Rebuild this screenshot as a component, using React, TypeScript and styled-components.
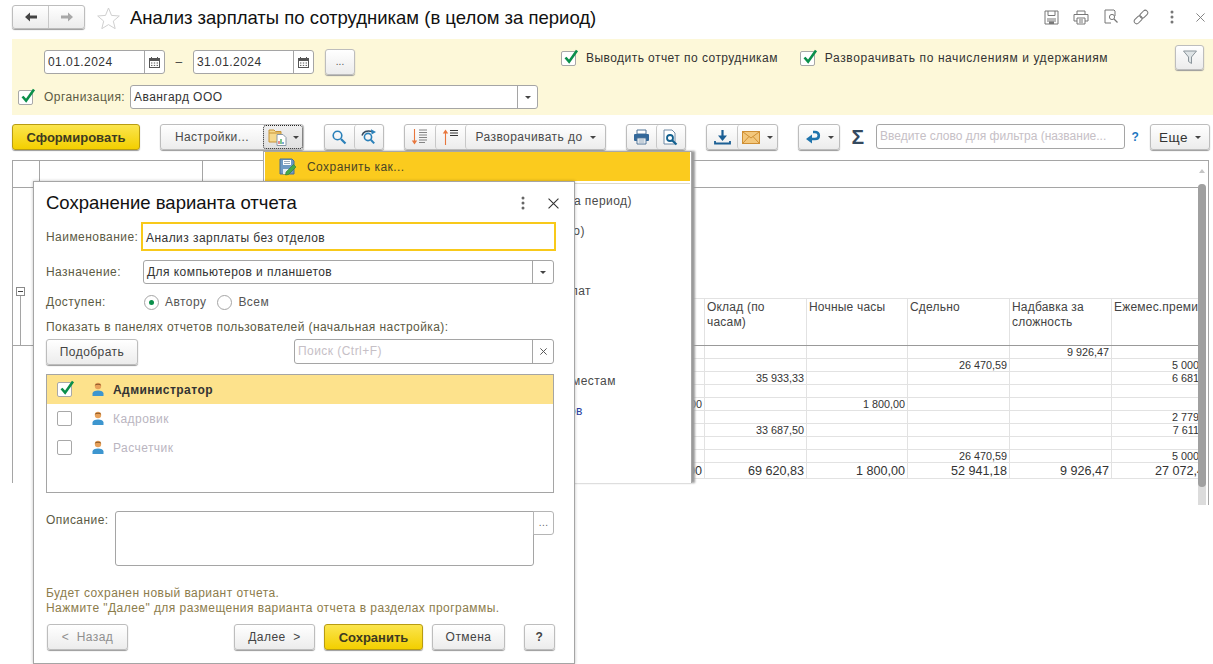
import React from "react";
import styled, { createGlobalStyle } from "styled-components";

const Global = createGlobalStyle`
  html, body { margin: 0; padding: 0; background: #fff; overflow: hidden; }
  body { font-family: "Liberation Sans", Arial, sans-serif; font-size: 12px; letter-spacing: .45px; color: #333; }
  * { box-sizing: border-box; }
`;

const Page = styled.div`
  position: relative;
  width: 1213px;
  height: 664px;
  overflow: hidden;
  background: #fff;
`;

/* ---------- header ---------- */
const Header = styled.header`
  display: flex;
  align-items: flex-start;
  height: 39px;
  padding: 5px 0 0 12px;
`;
const Nav = styled.div`
  display: flex;
  width: 73px;
  height: 24px;
  border: 1px solid #bdbdbd;
  border-radius: 3px;
  background: linear-gradient(#fff, #ececec);
  box-shadow: 0 1px 1px #999;
`;
const NavCell = styled.div<{ $divided?: boolean }>`
  flex: 1;
  display: flex;
  align-items: center;
  justify-content: center;
  border-left: ${(p) => (p.$divided ? "1px solid #c8c8c8" : "none")};
`;
const StarWrap = styled.div`
  margin: 2px 10px 0 12px;
  height: 22px;
`;
const Title = styled.h1`
  margin: 1px 0 0;
  font-size: 18.5px;
  font-weight: 400;
  letter-spacing: 0;
  line-height: 24px;
  color: #111;
  white-space: nowrap;
`;
const HeaderTools = styled.div`
  display: flex;
  align-items: center;
  gap: 14.5px;
  margin: 4px 8px 0 auto;
  > :nth-child(5) { margin-left: 6px; }
  > :nth-child(6) { margin-left: 8px; }
`;

/* ---------- filter panel ---------- */
const FilterPanel = styled.section`
  display: flex;
  height: 76px;
  margin-left: 12px;
  background: #fdf8d9;
`;
const FilterLeft = styled.div`
  width: 549px;
  padding: 11px 0 0 6px;
`;
const DateRow = styled.div`
  display: flex;
  align-items: center;
  height: 24px;
  padding-left: 26px;
`;
const Dash = styled.span`
  width: 28px;
  text-align: center;
  color: #444;
`;
const Field = styled.div<{ $w: number; $h?: number }>`
  display: flex;
  width: ${(p) => p.$w}px;
  height: ${(p) => p.$h ?? 24}px;
  flex: none;
  background: #fff;
  border: 1px solid #a5a5a5;
  border-radius: 3px;
  color: #333;
  line-height: ${(p) => (p.$h ?? 24) - 2}px;
`;
const FieldText = styled.div<{ $muted?: boolean }>`
  flex: 1;
  min-width: 0;
  padding-left: 3px;
  overflow: hidden;
  white-space: nowrap;
  color: ${(p) => (p.$muted ? "#c6c0c6" : "#333")};
`;
const FieldBtn = styled.div<{ $w?: number }>`
  width: ${(p) => p.$w ?? 20}px;
  flex: none;
  display: flex;
  align-items: center;
  justify-content: center;
  border-left: 1px solid #a5a5a5;
  color: #555;
`;
const DotsBtn = styled.button`
  width: 30px;
  height: 26px;
  margin-left: 11px;
  padding: 0 0 2px;
  border: 1px solid #bdbdbd;
  border-radius: 3px;
  background: linear-gradient(#fff, #ececec);
  box-shadow: 0 1px 1px #999;
  font: 10px "Liberation Sans", sans-serif;
  color: #555;
`;
const OrgRow = styled.div`
  display: flex;
  align-items: center;
  height: 24px;
  margin-top: 11px;
`;
const Label = styled.span<{ $w?: number }>`
  color: #5c5a44;
  white-space: nowrap;
  ${(p) => (p.$w ? `width: ${p.$w}px; flex: none;` : "")}
`;
const OrgLabel = styled(Label)`
  margin-left: 11px;
`;
const FilterChecks = styled.div`
  display: flex;
  gap: 22px;
  padding-top: 10px;
  height: 34px;
`;
const CheckLabel = styled.label`
  display: flex;
  align-items: center;
  gap: 10px;
  color: #333;
  white-space: nowrap;
  height: 18px;
`;
const WideCheckLabel = styled(CheckLabel)`
  letter-spacing: .6px;
`;
const FilterBtn = styled.button`
  display: flex;
  align-items: center;
  justify-content: center;
  width: 29px;
  height: 25px;
  margin: 6px 9px 0 auto;
  padding: 0;
  border: 1px solid #bdbdbd;
  border-radius: 3px;
  background: linear-gradient(#fff, #ececec);
  box-shadow: 0 1px 1px #999;
`;
const CheckBox = styled.span`
  position: relative;
  display: inline-block;
  flex: none;
  width: 15px;
  height: 15px;
  background: #fff;
  border: 1px solid #a8a8a8;
  border-radius: 2px;
  svg { position: absolute; left: 1px; top: -3px; }
`;

/* ---------- toolbar ---------- */
const Toolbar = styled.nav`
  display: flex;
  align-items: flex-start;
  gap: 20px;
  height: 26px;
  margin-top: 9px;
  padding-left: 12px;
`;
const btnBase = `
  display: flex;
  align-items: center;
  justify-content: center;
  height: 26px;
  border-radius: 3px;
  white-space: nowrap;
  font: 12px "Liberation Sans", sans-serif;
  letter-spacing: .45px;
`;
const PrimaryButton = styled.button<{ $w: number }>`
  ${btnBase}
  width: ${(p) => p.$w}px;
  padding: 0;
  border: 1px solid #b89c12;
  background: linear-gradient(#fbe54e, #f3cf00);
  box-shadow: 0 1px 1px #999;
  font-weight: 700;
  font-size: 13px;
  letter-spacing: 0;
  color: #3d3a20;
`;
const Group = styled.div<{ $w: number }>`
  display: flex;
  width: ${(p) => p.$w}px;
  height: 26px;
  flex: none;
  border: 1px solid #bdbdbd;
  border-radius: 3px;
  background: linear-gradient(#fff, #ececec);
  box-shadow: 0 1px 1px #999;
`;
const GroupCell = styled.div<{ $w?: number; $divided?: boolean; $gap?: number }>`
  ${btnBase}
  height: 24px;
  position: relative;
  gap: ${(p) => p.$gap ?? 5}px;
  color: #4a4a4a;
  ${(p) => (p.$w ? `width: ${p.$w}px; flex: none;` : "flex: 1;")}
  border-left: ${(p) => (p.$divided ? "1px solid #c8c8c8" : "none")};
`;
const FocusCell = styled(GroupCell)`
  outline: 1px dotted #222;
  outline-offset: -1px;
  background: linear-gradient(#f0f0f0, #e0e0e0);
`;
const MoreCell = styled(GroupCell)`
  font-size: 13.5px;
  color: #333;
`;
const Caret = styled.span`
  display: inline-block;
  width: 0;
  height: 0;
  border-left: 3px solid transparent;
  border-right: 3px solid transparent;
  border-top: 3px solid #444;
  margin-top: 1px;
`;
const SigmaBox = styled.div`
  width: 36px;
  margin-left: -20px;
  margin-right: -20px;
  text-align: center;
  font-size: 21px;
  line-height: 26px;
  font-weight: 700;
  color: #34495e;
`;
const SearchField = styled(Field)`
  letter-spacing: 0;
`;
const Help = styled.div`
  width: 25px;
  margin-left: -20px;
  margin-right: -20px;
  padding-right: 4px;
  text-align: center;
  line-height: 26px;
  font-weight: 700;
  color: #1f78c1;
`;

/* ---------- report ---------- */
const Report = styled.section`
  display: flex;
  align-items: flex-start;
  width: 1197px;
  margin: 10px 0 0 12px;
`;
const ReportBody = styled.div`
  width: 1186px;
  height: 323px;
  flex: none;
  overflow: hidden;
  border-top: 1px solid #a5a5a5;
  border-left: 1px solid #a5a5a5;
`;
const SheetHeads = styled.div`
  display: flex;
  height: 27px;
  border-bottom: 1px solid #a5a5a5;
`;
const SheetHead = styled.div<{ $w: number }>`
  width: ${(p) => p.$w}px;
  border-right: 1px solid #a5a5a5;
`;
const Sheet = styled.div`
  display: flex;
`;
const Gutter = styled.div`
  width: 21px;
  flex: none;
  height: 158px;
  padding: 99px 0 0 3px;
  border-bottom: 1px solid #a5a5a5;
`;
const OutlineBox = styled.div`
  position: relative;
  width: 9px;
  height: 9px;
  border: 1px solid #8a8a8a;
  background: #fff;
  &::after { content: ""; position: absolute; left: 1px; right: 1px; top: 3px; height: 1px; background: #444; }
`;
const OutlineLine = styled.div`
  width: 1px;
  height: 49px;
  margin-left: 4px;
  background: #a5a5a5;
`;
const DataTable = styled.table`
  flex: none;
  width: 614px;
  margin: 110px 0 0 568px;
  table-layout: fixed;
  border-collapse: collapse;
  font-size: 10.8px;
  letter-spacing: 0;
  color: #333;
  th, td { border: 1px solid #e2e2e2; padding: 0 2px 0 3px; overflow: hidden; white-space: nowrap; }
  th {
    height: 47px;
    padding: 1px 2px 0;
    vertical-align: top;
    text-align: left;
    font-weight: 400;
    font-size: 12px;
    letter-spacing: .2px;
    line-height: 15px;
    color: #444;
    white-space: normal;
    border-bottom: 1px solid #999;
  }
  td { height: 13px; line-height: 12px; text-align: right; }
`;
const TotalRow = styled.tr`
  td { height: 16px; padding-top: 1px; font-size: 12.6px; line-height: 14px; color: #333; }
  td:last-child { padding-right: 5px; }
`;
const ScrollColumn = styled.div`
  position: relative;
  width: 11px;
  height: 345px;
  flex: none;
  border-top: 1px solid #a5a5a5;
  border-right: 1px solid #a5a5a5;
  padding-right: 2px;
`;
const ScrollArrow = styled.div`
  height: 23px;
  padding: 8px 0 0 1px;
  &::after {
    content: "";
    display: block;
    width: 0;
    height: 0;
    border-left: 3px solid transparent;
    border-right: 3px solid transparent;
    border-bottom: 4px solid #c4c4c4;
  }
`;
const ScrollTrack = styled.div`
  height: 321px;
  background: #dcdcdc;
  border-radius: 4px 4px 0 0;
`;
const ScrollThumb = styled.div`
  height: 303px;
  background: #a0a0a0;
  border-radius: 4px;
`;

/* ---------- dropdown ---------- */
const Menu = styled.div`
  position: absolute;
  left: 263px;
  top: 151px;
  width: 429px;
  height: 332px;
  padding: 0 1px 1px;
  background: #fff;
  border: 1px solid #a8a8a8;
  border-bottom: none;
  box-shadow: 3px 0 2px #9a9a9a;
`;
const MenuActive = styled.div`
  display: flex;
  align-items: center;
  gap: 10px;
  height: 29px;
  padding-left: 14px;
  background: #fbcb1e;
  color: #4a4526;
`;
const MenuSep = styled.div`
  height: 1px;
  margin-top: 2px;
  background: #ddd8c6;
`;
const MenuItem = styled.div<{ $blue?: boolean }>`
  height: 30px;
  padding-left: 42px;
  line-height: 30px;
  white-space: nowrap;
  color: ${(p) => (p.$blue ? "#2b3fa0" : "#4a4a4a")};
`;
const MenuList = styled.div`
  margin-top: 2px;
`;

/* ---------- dialog ---------- */
const Dialog = styled.div`
  position: absolute;
  left: 33px;
  top: 181px;
  width: 542px;
  height: 483px;
  padding: 0 20px 0 12px;
  background: #fff;
  border: 1px solid #a5a5a5;
  box-shadow: 0 0 3px rgba(0, 0, 0, 0.25);
`;
const DialogHead = styled.div`
  display: flex;
  align-items: center;
  height: 40px;
`;
const DialogTitle = styled.h2`
  margin: 2px 0 0;
  font-size: 18.5px;
  font-weight: 400;
  letter-spacing: 0;
  color: #111;
  white-space: nowrap;
`;
const DialogTools = styled.div`
  display: flex;
  align-items: center;
  gap: 23px;
  margin: 2px -5px 0 auto;
`;
const NameRow = styled.div`
  display: flex;
  align-items: center;
  height: 29px;
  margin-right: -2px;
`;
const NameLabel = styled(Label)`
  padding-top: 1px;
`;
const NameInput = styled.div`
  flex: 1;
  height: 29px;
  padding-left: 3px;
  border: 2px solid #f8c91a;
  line-height: 28px;
  color: #333;
`;
const SelectRow = styled.div`
  display: flex;
  align-items: center;
  margin-top: 9px;
`;
const RadioRow = styled.div`
  display: flex;
  align-items: center;
  height: 18px;
  margin-top: 9px;
`;
const RadioLabel = styled.label`
  display: flex;
  align-items: center;
  gap: 6px;
  margin-right: 11px;
  color: #555;
`;
const Radio = styled.span<{ $on?: boolean }>`
  position: relative;
  width: 15px;
  height: 15px;
  flex: none;
  border: 1px solid #a5a5a5;
  border-radius: 50%;
  background: #fff;
  ${(p) =>
    p.$on
      ? `&::after { content: ""; position: absolute; left: 4px; top: 4px; width: 5px; height: 5px; border-radius: 50%; background: #0a8f4a; }`
      : ""}
`;
const Caption = styled.div`
  margin-top: 9px;
  height: 14px;
  line-height: 14px;
  letter-spacing: .42px;
  white-space: nowrap;
  color: #5c5a44;
`;
const PickRow = styled.div`
  display: flex;
  align-items: flex-start;
  justify-content: space-between;
  margin-top: 5px;
  height: 25px;
`;
const PlainButton = styled.button<{ $w: number }>`
  ${btnBase}
  width: ${(p) => p.$w}px;
  height: 26px;
  padding: 0;
  flex: none;
  border: 1px solid #bdbdbd;
  background: linear-gradient(#fff, #ececec);
  box-shadow: 0 1px 1px #999;
  color: #444;
`;
const UserList = styled.div`
  height: 119px;
  margin-top: 10px;
  border: 1px solid #a5a5a5;
`;
const UserRow = styled.div<{ $active?: boolean }>`
  display: flex;
  align-items: center;
  height: 29px;
  padding-left: 10px;
  background: ${(p) => (p.$active ? "#fde28c" : "#fff")};
  color: ${(p) => (p.$active ? "#333" : "#bab5bf")};
  font-weight: ${(p) => (p.$active ? 700 : 400)};
`;
const PersonMark = styled.span`
  display: flex;
  margin: 0 8px 0 19px;
`;
const DescRow = styled.div`
  display: flex;
  margin-top: 18px;
`;
const DescLabel = styled(Label)`
  width: 69px;
  padding-top: 2px;
`;
const DescArea = styled.div`
  width: 420px;
  height: 55px;
  background: #fff;
  border: 1px solid #a5a5a5;
  border-radius: 3px 0 3px 3px;
`;
const DescBtn = styled.div`
  width: 21px;
  height: 24px;
  margin-left: -1px;
  border: 1px solid #b5b5b5;
  border-radius: 0 3px 3px 0;
  text-align: center;
  line-height: 22px;
  font-size: 10px;
  color: #666;
`;
const Hint = styled.p`
  margin: 20px 0 0;
  line-height: 15px;
  color: #8c7c4b;
  white-space: nowrap;
`;
const Footer = styled.div`
  display: flex;
  align-items: flex-start;
  margin: 8px -1px 0 1px;
`;
const FooterButton = styled(PlainButton)<{ $mute?: boolean; $ml?: number }>`
  margin-left: ${(p) => p.$ml ?? 0}px;
  color: ${(p) => (p.$mute ? "#8f8f8f" : "#444")};
`;
const SaveButton = styled(PrimaryButton)`
  margin-left: 9px;
`;

/* ---------- icons ---------- */
const ArrowL = ({ c = "#444" }: { c?: string }) => (
  <svg width="14" height="12" viewBox="0 0 14 12"><path d="M1 6l5-4.500v3h7v3H6v3z" fill={c} /></svg>
);
const ArrowR = ({ c = "#a8a8a8" }: { c?: string }) => (
  <svg width="14" height="12" viewBox="0 0 14 12"><path d="M13 6L8 1.500v3H1v3h7v3z" fill={c} /></svg>
);
const Star = () => (
  <svg width="23" height="22" viewBox="0 0 23 22">
    <path d="M11.500 1l3 7.400 7.800.6-6 5.100 1.900 7.600-6.700-4.100-6.700 4.100 1.900-7.600-6-5.100 7.800-.6z" fill="#fff" stroke="#cfcfcf" />
  </svg>
);
const Check = () => (
  <svg width="16" height="16" viewBox="0 0 16 16">
    <path d="M2.500 8.500l3.600 4.200L14 1.500" fill="none" stroke="#0b8f4b" strokeWidth="2.600" />
  </svg>
);
const Calendar = () => (
  <svg width="11" height="11" viewBox="0 0 11 11">
    <rect x=".5" y="1.500" width="10" height="9" fill="#fff" stroke="#555" />
    <rect x="1" y="1" width="9" height="3" fill="#555" />
    <path d="M2.500 0v2M8.500 0v2" stroke="#555" />
    <path d="M2 6h1.400M4.800 6h1.400M7.600 6H9M2 8.400h1.400M4.800 8.400h1.400M7.600 8.400H9" stroke="#555" />
  </svg>
);
const Funnel = () => (
  <svg width="14" height="15" viewBox="0 0 14 15">
    <path d="M.5 1h13L8.500 7v6.500l-3-2V7z" fill="#dfe4e6" stroke="#8a949a" />
  </svg>
);
const FolderChart = () => (
  <svg width="20" height="18" viewBox="0 0 20 18">
    <path d="M1 2h5l1.500 1.500H13V14H1z" fill="#f6d98c" stroke="#c89436" />
    <path d="M1 5h12" stroke="#c89436" />
    <path d="M9 6.500h6l3 3v8H9z" fill="#fff" stroke="#8a98a4" />
    <path d="M11 16v-3" stroke="#d9534f" strokeWidth="1.300" />
    <path d="M13 16v-5" stroke="#3aa655" strokeWidth="1.300" />
    <path d="M15 16v-2" stroke="#3b7fc4" strokeWidth="1.300" />
  </svg>
);
const Loupe = () => (
  <svg width="16" height="16" viewBox="0 0 16 16">
    <circle cx="6.500" cy="6.500" r="4.300" fill="none" stroke="#2a80b9" strokeWidth="1.600" />
    <path d="M10 10l4.500 4.500" stroke="#2a80b9" strokeWidth="2.200" />
  </svg>
);
const LoupeRefresh = () => (
  <svg width="18" height="16" viewBox="0 0 18 16">
    <circle cx="8" cy="8" r="3.600" fill="none" stroke="#2a80b9" strokeWidth="1.600" />
    <path d="M10.800 10.800l3.400 3.600" stroke="#2a80b9" strokeWidth="2" />
    <path d="M2 6.500C3 3 7 .8 12 2.500" fill="none" stroke="#34495e" strokeWidth="1.500" />
    <path d="M11 .2l5 2.800-4.400 2.600z" fill="#2a80b9" />
  </svg>
);
const SortDown = () => (
  <svg width="18" height="18" viewBox="0 0 18 18">
    <path d="M3.500 1v13" stroke="#e8763c" strokeWidth="1.100" />
    <path d="M.8 12.500h5.400L3.500 16.500z" fill="#e8763c" />
    <path d="M8 2h8M8 4.500h8M8 7h8M8 9.500h8M8 12h8M8 14.500h6" stroke="#777" strokeWidth=".9" />
  </svg>
);
const SortUp = () => (
  <svg width="18" height="18" viewBox="0 0 18 18">
    <path d="M3.500 17V4" stroke="#e8763c" strokeWidth="1.100" />
    <path d="M.8 5.500h5.400L3.500 1.500z" fill="#e8763c" />
    <path d="M8 2.500h8M8 5h8M8 7.500h8" stroke="#333" strokeWidth="1" />
  </svg>
);
const Printer = () => (
  <svg width="17" height="16" viewBox="0 0 17 16">
    <path d="M4 1h9v4H4z" fill="#fff" stroke="#4f7396" />
    <rect x="1" y="5" width="15" height="7" rx="1" fill="#33689a" />
    <path d="M4 9h9v6H4z" fill="#fff" stroke="#4f7396" />
    <path d="M5.500 11h6M5.500 13h6" stroke="#8aa0b4" />
  </svg>
);
const Preview = () => (
  <svg width="17" height="17" viewBox="0 0 17 17">
    <path d="M2 1h8l3 3v11H2z" fill="#fff" stroke="#6e8aa5" />
    <circle cx="8" cy="9" r="3" fill="#fff" stroke="#12608f" strokeWidth="1.800" />
    <path d="M10 11.200l4.500 4.300" stroke="#12608f" strokeWidth="2.200" />
  </svg>
);
const Download = () => (
  <svg width="17" height="16" viewBox="0 0 17 16">
    <path d="M8.500 1v7" stroke="#1b5f94" strokeWidth="2.200" />
    <path d="M4 6.500h9L8.500 12z" fill="#1b5f94" />
    <path d="M1 12v2.500h15V12" fill="none" stroke="#1b5f94" strokeWidth="1.800" />
  </svg>
);
const Mail = () => (
  <svg width="18" height="13" viewBox="0 0 18 13">
    <rect x=".5" y=".5" width="17" height="12" fill="#f3c77c" stroke="#cf8f34" />
    <path d="M1 1l8 6 8-6M1 12l6-6.500M17 12l-6-6.500" fill="none" stroke="#cf8f34" />
  </svg>
);
const Undo = () => (
  <svg width="16" height="15" viewBox="0 0 16 15">
    <path d="M6 9h4c2.400 0 3.800-1.400 3.800-3.600S12.400 2 10 2H8" fill="none" stroke="#1f74ad" strokeWidth="2.600" />
    <path d="M7 4.500v9L1 9z" fill="#1f74ad" />
  </svg>
);
const SaveAs = () => (
  <svg width="18" height="18" viewBox="0 0 18 18">
    <path d="M1 1h12l2 2v13H1z" fill="#6f9ac4" stroke="#4a6f96" />
    <path d="M4 2h8v5H4z" fill="#fff" />
    <path d="M5 3.500h6M5 5.500h6" stroke="#9ab" />
    <path d="M4 11h6v5H4z" fill="#e6edf3" />
    <path d="M7 14l7.500-7.500 2.500 2.500L9.500 16.500 6.500 17z" fill="#46a84a" stroke="#2e7d32" strokeWidth=".6" />
  </svg>
);
const Person = () => (
  <svg width="14" height="15" viewBox="0 0 14 15">
    <circle cx="7" cy="4" r="3.200" fill="#e8a15a" />
    <path d="M3.800 3.500C4 1 10 1 10.200 3.500 8.500 2.500 5.500 2.500 3.800 3.500z" fill="#8a5a2a" />
    <path d="M1.500 14v-2.500C1.500 9.500 4 8.500 7 8.500s5.500 1 5.500 3V14z" fill="#3d96cf" />
  </svg>
);
const DiskGrey = () => (
  <svg width="15" height="15" viewBox="0 0 15 15">
    <path d="M1 1h13v13H1z" fill="none" stroke="#777" />
    <path d="M4 1v4.500h7V1M3 9h9M3 11h9" fill="none" stroke="#777" />
    <path d="M5 11.500h5V14H5z" fill="#777" />
  </svg>
);
const PrinterGrey = () => (
  <svg width="16" height="15" viewBox="0 0 16 15">
    <path d="M4 4V1h8v3M1 4.500h14v6.500h-3M4 11H1V4.500" fill="none" stroke="#777" />
    <path d="M4 8h8v6H4zM6 10h4M6 12h4" fill="none" stroke="#777" />
  </svg>
);
const PreviewGrey = () => (
  <svg width="15" height="16" viewBox="0 0 15 16">
    <path d="M10 1H1v13h6M10 1l1 1v5" fill="none" stroke="#777" />
    <circle cx="8" cy="8" r="2.600" fill="none" stroke="#777" />
    <path d="M10 10l3.500 3.500" stroke="#777" strokeWidth="1.300" />
  </svg>
);
const LinkGrey = () => (
  <svg width="16" height="16" viewBox="0 0 16 16">
    <g transform="rotate(-45 8 8)" fill="none" stroke="#777">
      <rect x="-.5" y="5.500" width="9" height="5" rx="2.500" />
      <rect x="7.500" y="5.500" width="9" height="5" rx="2.500" />
    </g>
  </svg>
);
const Dots = ({ c = "#777" }: { c?: string }) => (
  <svg width="4" height="14" viewBox="0 0 4 14">
    <circle cx="2" cy="2" r="1.500" fill={c} /><circle cx="2" cy="7" r="1.500" fill={c} /><circle cx="2" cy="12" r="1.500" fill={c} />
  </svg>
);
const Cross = ({ s = 9, c = "#777", w = 1 }: { s?: number; c?: string; w?: number }) => (
  <svg width={s} height={s} viewBox="0 0 10 10"><path d="M.5.5l9 9M9.500.5l-9 9" stroke={c} strokeWidth={w} /></svg>
);

const rows: string[][] = [
  ["", "", "", "", "9 926,47", ""],
  ["", "", "", "26 470,59", "", "5 000,00"],
  ["", "35 933,33", "", "", "", "6 681,25"],
  ["", "", "", "", "", ""],
  ["00", "", "1 800,00", "", "", ""],
  ["", "", "", "", "", "2 779,41"],
  ["", "33 687,50", "", "", "", "7 611,76"],
  ["", "", "", "", "", ""],
  ["", "", "", "26 470,59", "", "5 000,00"],
];
const totals = ["00", "69 620,83", "1 800,00", "52 941,18", "9 926,47", "27 072,42"];
const heads = ["", "Оклад (по часам)", "Ночные часы", "Сдельно", "Надбавка за сложность", "Ежемес.премия"];
const colWidths = [102, 102, 101, 102, 102, 105];

const menuItems: { text: string; blue?: boolean }[] = [
  { text: "Анализ зарплаты по сотрудникам (в целом за период)" },
  { text: "Анализ зарплаты по сотрудникам (помесячно)" },
  { text: "" },
  { text: "Анализ зарплаты сотрудников и прочих выплат" },
  { text: "" },
  { text: "" },
  { text: "Анализ зарплаты по работникам и рабочим местам" },
  { text: "Анализ зарплаты и взносов работников цехов", blue: true },
];

const users = [
  { name: "Администратор", on: true },
  { name: "Кадровик", on: false },
  { name: "Расчетчик", on: false },
];

export default function App() {
  return (
    <Page>
      <Global />
      <Header>
        <Nav>
          <NavCell><ArrowL /></NavCell>
          <NavCell $divided><ArrowR /></NavCell>
        </Nav>
        <StarWrap><Star /></StarWrap>
        <Title>Анализ зарплаты по сотрудникам (в целом за период)</Title>
        <HeaderTools>
          <DiskGrey /><PrinterGrey /><PreviewGrey /><LinkGrey /><Dots />
          <Cross />
        </HeaderTools>
      </Header>

      <FilterPanel>
        <FilterLeft>
          <DateRow>
            <Field $w={121}>
              <FieldText>01.01.2024</FieldText>
              <FieldBtn><Calendar /></FieldBtn>
            </Field>
            <Dash>–</Dash>
            <Field $w={121}>
              <FieldText>31.01.2024</FieldText>
              <FieldBtn><Calendar /></FieldBtn>
            </Field>
            <DotsBtn>...</DotsBtn>
          </DateRow>
          <OrgRow>
            <CheckBox><Check /></CheckBox>
            <OrgLabel $w={86}>Организация:</OrgLabel>
            <Field $w={408}>
              <FieldText>Авангард ООО</FieldText>
              <FieldBtn><Caret /></FieldBtn>
            </Field>
          </OrgRow>
        </FilterLeft>
        <FilterChecks>
          <CheckLabel><CheckBox><Check /></CheckBox>Выводить отчет по сотрудникам</CheckLabel>
          <WideCheckLabel><CheckBox><Check /></CheckBox>Разворачивать по начислениям и удержаниям</WideCheckLabel>
        </FilterChecks>
        <FilterBtn><Funnel /></FilterBtn>
      </FilterPanel>

      <Toolbar>
        <PrimaryButton $w={128}>Сформировать</PrimaryButton>
        <Group $w={144}>
          <GroupCell>Настройки...</GroupCell>
          <FocusCell $w={40}><FolderChart /><Caret /></FocusCell>
        </Group>
        <Group $w={60}>
          <GroupCell><Loupe /></GroupCell>
          <GroupCell $divided><LoupeRefresh /></GroupCell>
        </Group>
        <Group $w={202}>
          <GroupCell $w={30}><SortDown /></GroupCell>
          <GroupCell $w={30} $divided><SortUp /></GroupCell>
          <GroupCell $divided $gap={7}>Разворачивать до <Caret /></GroupCell>
        </Group>
        <Group $w={60}>
          <GroupCell><Printer /></GroupCell>
          <GroupCell $divided><Preview /></GroupCell>
        </Group>
        <Group $w={72}>
          <GroupCell $w={30}><Download /></GroupCell>
          <GroupCell $divided $gap={7}><Mail /><Caret /></GroupCell>
        </Group>
        <Group $w={42}>
          <GroupCell $gap={7}><Undo /><Caret /></GroupCell>
        </Group>
        <SigmaBox>Σ</SigmaBox>
        <SearchField $w={249} $h={25}>
          <FieldText $muted>Введите слово для фильтра (название...</FieldText>
        </SearchField>
        <Help>?</Help>
        <Group $w={60}>
          <MoreCell $gap={7}>Еще <Caret /></MoreCell>
        </Group>
      </Toolbar>

      <Report>
        <ReportBody>
          <SheetHeads>
            <SheetHead $w={27} />
            <SheetHead $w={163} />
          </SheetHeads>
          <Sheet>
            <Gutter>
              <OutlineBox />
              <OutlineLine />
            </Gutter>
            <DataTable>
              <colgroup>
                {colWidths.map((w, i) => <col key={i} style={{ width: w }} />)}
              </colgroup>
              <thead>
                <tr>{heads.map((h, i) => <th key={i}>{h}</th>)}</tr>
              </thead>
              <tbody>
                {rows.map((r, i) => (
                  <tr key={i}>{r.map((c, j) => <td key={j}>{c}</td>)}</tr>
                ))}
                <TotalRow>{totals.map((c, j) => <td key={j}>{c}</td>)}</TotalRow>
              </tbody>
            </DataTable>
          </Sheet>
        </ReportBody>
        <ScrollColumn>
          <ScrollArrow />
          <ScrollTrack><ScrollThumb /></ScrollTrack>
        </ScrollColumn>
      </Report>

      <Menu>
        <MenuActive><SaveAs />Сохранить как...</MenuActive>
        <MenuSep />
        <MenuList>
          {menuItems.map((m, i) => <MenuItem key={i} $blue={m.blue}>{m.text}</MenuItem>)}
        </MenuList>
      </Menu>

      <Dialog>
        <DialogHead>
          <DialogTitle>Сохранение варианта отчета</DialogTitle>
          <DialogTools>
            <Dots c="#666" />
            <Cross s={11} c="#333" />
          </DialogTools>
        </DialogHead>
        <NameRow>
          <NameLabel $w={95}>Наименование:</NameLabel>
          <NameInput>Анализ зарплаты без отделов</NameInput>
        </NameRow>
        <SelectRow>
          <Label $w={97}>Назначение:</Label>
          <Field $w={411}>
            <FieldText>Для компьютеров и планшетов</FieldText>
            <FieldBtn $w={21}><Caret /></FieldBtn>
          </Field>
        </SelectRow>
        <RadioRow>
          <Label $w={98}>Доступен:</Label>
          <RadioLabel><Radio $on />Автору</RadioLabel>
          <RadioLabel><Radio />Всем</RadioLabel>
        </RadioRow>
        <Caption>Показать в панелях отчетов пользователей (начальная настройка):</Caption>
        <PickRow>
          <PlainButton $w={92}>Подобрать</PlainButton>
          <Field $w={260} $h={25}>
            <FieldText $muted>Поиск (Ctrl+F)</FieldText>
            <FieldBtn $w={21}><Cross s={7} c="#555" w={1.4} /></FieldBtn>
          </Field>
        </PickRow>
        <UserList>
          {users.map((u) => (
            <UserRow key={u.name} $active={u.on}>
              <CheckBox>{u.on && <Check />}</CheckBox>
              <PersonMark><Person /></PersonMark>
              <span>{u.name}</span>
            </UserRow>
          ))}
        </UserList>
        <DescRow>
          <DescLabel>Описание:</DescLabel>
          <DescArea />
          <DescBtn>...</DescBtn>
        </DescRow>
        <Hint>
          Будет сохранен новый вариант отчета.
          <br />
          Нажмите "Далее" для размещения варианта отчета в разделах программы.
        </Hint>
        <Footer>
          <FooterButton $w={81} $mute>{"<\u00a0\u00a0Назад"}</FooterButton>
          <FooterButton $w={81} $ml={106}>{"Далее\u00a0\u00a0>"}</FooterButton>
          <SaveButton $w={99}>Сохранить</SaveButton>
          <FooterButton $w={73} $ml={9}>Отмена</FooterButton>
          <FooterButton $w={31} $ml={19}><b>?</b></FooterButton>
        </Footer>
      </Dialog>
    </Page>
  );
}
